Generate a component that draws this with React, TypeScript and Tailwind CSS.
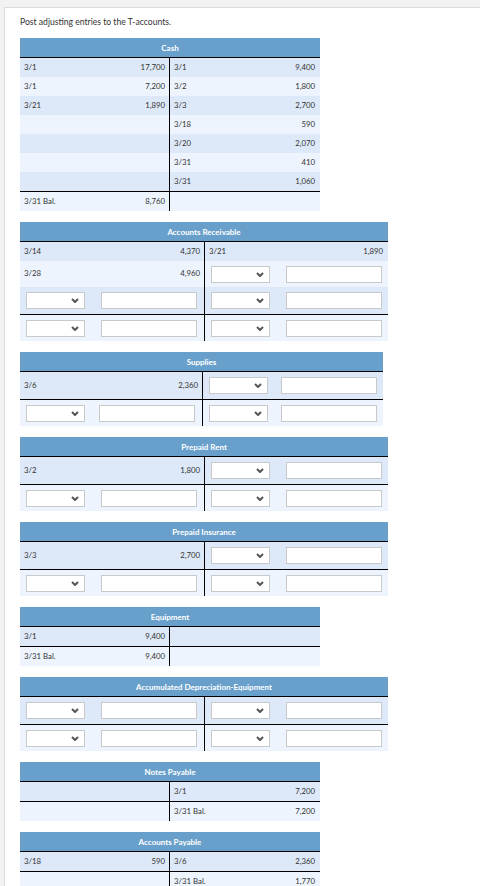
import React from 'react';

type Cell =
  | { kind: 'text'; date: string; amt: string }
  | { kind: 'input' }
  | { kind: 'empty' };

type Row = { l: Cell; r: Cell; h: 19 | 26 | 27; line?: boolean };

type Acct = { title: string; w: 300 | 368 | 363; rows: Row[] };

const t = (date: string, amt: string): Cell => ({ kind: 'text', date, amt });
const I: Cell = { kind: 'input' };
const E: Cell = { kind: 'empty' };

const H: Record<number, string> = {
  19: 'h-[19px]',
  26: 'h-[26px]',
  27: 'h-[27px]',
};

const W: Record<number, string> = {
  300: 'w-[300px]',
  368: 'w-[368px]',
  363: 'w-[363px]',
};

const LW: Record<number, string> = {
  300: 'w-[150px]',
  368: 'w-[185px]',
  363: 'w-[183px]',
};

const accounts: Acct[] = [
  {
    title: 'Cash',
    w: 300,
    rows: [
      { l: t('3/1', '17,700'), r: t('3/1', '9,400'), h: 19 },
      { l: t('3/1', '7,200'), r: t('3/2', '1,800'), h: 19 },
      { l: t('3/21', '1,890'), r: t('3/3', '2,700'), h: 19 },
      { l: E, r: t('3/18', '590'), h: 19 },
      { l: E, r: t('3/20', '2,070'), h: 19 },
      { l: E, r: t('3/31', '410'), h: 19 },
      { l: E, r: t('3/31', '1,060'), h: 19 },
      { l: t('3/31 Bal.', '8,760'), r: E, h: 19, line: true },
    ],
  },
  {
    title: 'Accounts Receivable',
    w: 368,
    rows: [
      { l: t('3/14', '4,370'), r: t('3/21', '1,890'), h: 19 },
      { l: t('3/28', '4,960'), r: I, h: 26 },
      { l: I, r: I, h: 27 },
      { l: I, r: I, h: 26, line: true },
    ],
  },
  {
    title: 'Supplies',
    w: 363,
    rows: [
      { l: t('3/6', '2,360'), r: I, h: 27 },
      { l: I, r: I, h: 26, line: true },
    ],
  },
  {
    title: 'Prepaid Rent',
    w: 368,
    rows: [
      { l: t('3/2', '1,800'), r: I, h: 27 },
      { l: I, r: I, h: 26, line: true },
    ],
  },
  {
    title: 'Prepaid Insurance',
    w: 368,
    rows: [
      { l: t('3/3', '2,700'), r: I, h: 27 },
      { l: I, r: I, h: 26, line: true },
    ],
  },
  {
    title: 'Equipment',
    w: 300,
    rows: [
      { l: t('3/1', '9,400'), r: E, h: 19 },
      { l: t('3/31 Bal.', '9,400'), r: E, h: 19, line: true },
    ],
  },
  {
    title: 'Accumulated Depreciation-Equipment',
    w: 368,
    rows: [
      { l: I, r: I, h: 27 },
      { l: I, r: I, h: 26, line: true },
    ],
  },
  {
    title: 'Notes Payable',
    w: 300,
    rows: [
      { l: E, r: t('3/1', '7,200'), h: 19 },
      { l: E, r: t('3/31 Bal.', '7,200'), h: 19, line: true },
    ],
  },
  {
    title: 'Accounts Payable',
    w: 300,
    rows: [
      { l: t('3/18', '590'), r: t('3/6', '2,360'), h: 19 },
      { l: E, r: t('3/31 Bal.', '1,770'), h: 19, line: true },
    ],
  },
];

function Select() {
  return (
    <div className="w-[59px] h-[17px] border border-[#c9c9c9] bg-white flex items-center justify-end pr-[5px] shrink-0">
      <svg width="8" height="5" viewBox="0 0 8 5">
        <polyline points="1,1 4,4 7,1" fill="none" stroke="#555" strokeWidth="2" />
      </svg>
    </div>
  );
}

function Input() {
  return <div className="w-[96px] h-[17px] border border-[#c9c9c9] bg-white shrink-0" />;
}

function CellView({ c, side }: { c: Cell; side: 'l' | 'r' }) {
  if (c.kind === 'text') {
    return (
      <div className={'flex h-full items-center justify-between pl-[4px] ' + (side === 'l' ? 'pr-[4px]' : 'pr-[5px]')}>
        <span>{c.date}</span>
        <span>{c.amt}</span>
      </div>
    );
  }
  if (c.kind === 'input') {
    return (
      <div className={'flex h-full items-center justify-between pl-[6px] ' + (side === 'l' ? 'pr-[7px]' : 'pr-[6px]')}>
        <Select />
        <Input />
      </div>
    );
  }
  return <div className="h-full" />;
}

function TAccount({ a }: { a: Acct }) {
  return (
    <div className={W[a.w] + ' mb-[11px]'}>
      <div className="h-[19px] bg-[#689fcb] flex items-center justify-center text-white font-bold text-[8px]">
        {a.title}
      </div>
      <div className="h-px bg-black" />
      {a.rows.map((r, i) => (
        <React.Fragment key={i}>
          {r.line && <div className="h-px bg-black" />}
          <div className={'flex ' + H[r.h] + ' ' + (i % 2 === 0 ? 'bg-[#dde8f8]' : 'bg-[#edf4fd]')}>
            <div className={LW[a.w] + ' border-r border-black shrink-0'}>
              <CellView c={r.l} side="l" />
            </div>
            <div className="flex-1">
              <CellView c={r.r} side="r" />
            </div>
          </div>
        </React.Fragment>
      ))}
    </div>
  );
}

export default function App() {
  return (
    <div
      className="min-h-[886px] bg-[#f2f2f2] pt-[7px] pl-[4px] text-[#333] text-[7.8px]"
      style={{ fontFamily: 'Lato, "Liberation Sans", sans-serif' }}
    >
      <div className="min-h-[879px] bg-white border-l border-t border-[#dcdcdc] pl-[15px] pt-[8px]">
        <div className="h-[12px] leading-[12px] mb-[10px] text-[8.6px]">Post adjusting entries to the T-accounts.</div>
        {accounts.map((a) => (
          <TAccount key={a.title} a={a} />
        ))}
      </div>
    </div>
  );
}
